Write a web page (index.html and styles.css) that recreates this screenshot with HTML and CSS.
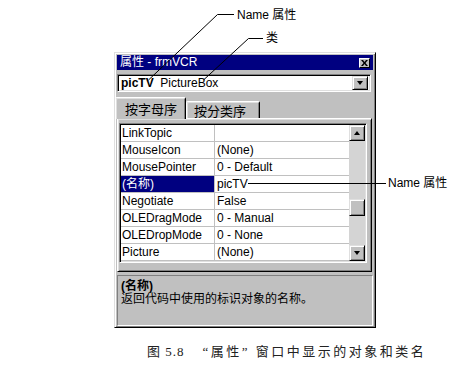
FILE: index.html
```html
<!DOCTYPE html>
<html lang="zh-CN">
<head>
    <meta charset="UTF-8">
    <meta name="viewport" content="width=device-width, initial-scale=1.0">
    <title>属性窗口</title>
    <link rel="stylesheet" href="styles.css">
</head>
<body>
    <div class="page">
        <div class="window">
            <div class="titlebar">
                <span class="title">属性 - frmVCR</span>
                <span class="close">
                    <svg width="7" height="6" viewBox="0 0 7 6"><path d="M0 0h2l1.5 2L5 0h2L4.5 3 7 6H5L3.5 4 2 6H0l2.5-3z" fill="#000"/></svg>
                </span>
            </div>

            <div class="combo">
                <span class="combo-text"><b>picTV</b>&nbsp; PictureBox</span>
                <span class="btn drop"><i class="arrow-down"></i></span>
            </div>

            <div class="tabs">
                <span class="tab active">按字母序</span>
                <span class="tab">按分类序</span>
            </div>

            <div class="tabpanel">
                <div class="grid">
                    <div class="rows">
                        <div class="row"><span class="name">LinkTopic</span><span class="value"></span></div>
                        <div class="row"><span class="name">MouseIcon</span><span class="value">(None)</span></div>
                        <div class="row"><span class="name">MousePointer</span><span class="value">0 - Default</span></div>
                        <div class="row selected"><span class="name">(名称)</span><span class="value">picTV</span></div>
                        <div class="row"><span class="name">Negotiate</span><span class="value">False</span></div>
                        <div class="row"><span class="name">OLEDragMode</span><span class="value">0 - Manual</span></div>
                        <div class="row"><span class="name">OLEDropMode</span><span class="value">0 - None</span></div>
                        <div class="row"><span class="name">Picture</span><span class="value">(None)</span></div>
                    </div>
                    <div class="vscroll">
                        <span class="btn sbtn"><i class="arrow-up"></i></span>
                        <span class="track"><span class="btn thumb"></span></span>
                        <span class="btn sbtn"><i class="arrow-down"></i></span>
                    </div>
                </div>
            </div>

            <div class="desc">
                <b>(名称)</b>
                <span>返回代码中使用的标识对象的名称。</span>
            </div>
        </div>

        <p class="caption"><span class="fig">图 5.8</span><span class="cap-text">“属性” 窗口中显示的对象和类名</span></p>

        <!-- leader lines for the annotations -->
        <svg class="callouts" width="457" height="366">
            <polyline points="148.5,80 217.5,14.5 234,14.5" />
            <polyline points="203.5,80 248.5,38.5 263,38.5" />
            <polyline points="248,183.5 386,183.5" />
        </svg>
        <span class="label label-name">Name 属性</span>
        <span class="label label-class">类</span>
        <span class="label label-name2">Name 属性</span>
    </div>
</body>
</html>
```

FILE: styles.css
```css
* {
    box-sizing: border-box;
}

body {
    margin: 0;
    background: #fff;
    font-family: "Liberation Sans", "Noto Sans CJK SC", sans-serif;
    font-size: 11px;
    color: #000;
}

.page {
    position: relative;
    width: 457px;
    height: 366px;
    padding: 52px 0 0 114px;
}

.window {
    width: 262px;
    height: 276px;
    background: #c0c0c0;
    border: 1px solid;
    border-color: #dfdfdf #000 #000 #dfdfdf;
    box-shadow: inset 1px 1px #fff, inset -1px -1px #808080;
    padding: 2px;
}

.titlebar {
    display: flex;
    align-items: center;
    justify-content: space-between;
    height: 15px;
    padding: 0 3px 0 3px;
    background: #000080;
    color: #fff;
}

.title {
    font-size: 12px;
    line-height: 15px;
}

.close {
    display: flex;
    align-items: center;
    justify-content: center;
    width: 11px;
    height: 10px;
    background: #c0c0c0;
    border: 1px solid;
    border-color: #fff #000 #000 #fff;
}

.btn {
    display: flex;
    align-items: center;
    justify-content: center;
    background: #c0c0c0;
    border: 1px solid;
    border-color: #dfdfdf #000 #000 #dfdfdf;
    box-shadow: inset 1px 1px #fff, inset -1px -1px #808080;
}

.arrow-down,
.arrow-up {
    width: 0;
    height: 0;
    border-left: 3.5px solid transparent;
    border-right: 3.5px solid transparent;
}

.arrow-down {
    border-top: 4px solid #000;
}

.arrow-up {
    border-bottom: 4px solid #000;
}

.combo {
    display: flex;
    align-items: center;
    justify-content: space-between;
    width: 254px;
    height: 18px;
    margin-top: 4px;
    padding: 2px;
    background: #fff;
    border: 1px solid;
    border-color: #808080 #fff #fff #808080;
    box-shadow: inset 1px 1px #000, inset -1px -1px #dfdfdf;
}

.combo-text {
    font-size: 12px;
    padding-left: 1px;
}

.combo-text b {
    font-size: 12px;
}

.drop {
    width: 16px;
    height: 14px;
}

.tabs {
    display: flex;
    align-items: flex-end;
    height: 21px;
    margin-top: 5px;
    padding-left: 0;
    position: relative;
    z-index: 1;
}

.tab {
    display: flex;
    align-items: center;
    height: 17px;
    padding: 0 7px;
    font-size: 12px;
    background: #c0c0c0;
    border: 1px solid;
    border-bottom: none;
    border-color: #fff #000 #000 #fff;
    box-shadow: inset 1px 1px #dfdfdf, inset -1px 0 #808080;
    border-radius: 2px 2px 0 0;
}

.tab.active {
    height: 22px;
    margin-bottom: -1px;
    margin-left: -2px;
    padding: 0 8px 0 9px;
    font-size: 13px;
}

.tab + .tab {
    width: 74px;
    font-size: 13px;
}

.tabpanel {
    width: 255px;
    height: 154px;
    padding: 4px 2px 3px 1px;
    background: #c0c0c0;
    border: 1px solid;
    border-color: #fff #000 #000 #fff;
    box-shadow: inset 1px 1px #dfdfdf, inset -1px -1px #808080;
}

.grid {
    display: flex;
    width: 248px;
    height: 140px;
    background: #fff;
    border: 1px solid;
    border-color: #808080 #fff #fff #808080;
    box-shadow: inset 1px 1px #000, inset -1px -1px #dfdfdf;
    padding: 1px;
    font-size: 12px;
}

.rows {
    flex: 1;
}

.row {
    display: flex;
    height: 17px;
    border-bottom: 1px solid #c0c0c0;
}

.name {
    width: 94px;
    padding-left: 1px;
    line-height: 16px;
    border-right: 1px solid #c0c0c0;
}

.value {
    flex: 1;
    padding-left: 2px;
    line-height: 16px;
}

.selected .name {
    background: #000080;
    color: #fff;
}

.vscroll {
    display: flex;
    flex-direction: column;
    width: 16px;
    background: #e0e0e0;
}

.sbtn {
    width: 16px;
    height: 16px;
}

.track {
    flex: 1;
    background: #d4d4d4;
}

.thumb {
    width: 16px;
    height: 17px;
    margin-top: 58px;
}

.desc {
    display: flex;
    flex-direction: column;
    height: 51px;
    margin-top: 3px;
    padding: 4px 3px;
    font-size: 12px;
    line-height: 13px;
    border: 1px solid;
    border-color: #808080 #fff #fff #808080;
}

.caption {
    margin: 17px 0 0 33px;
    font-family: "Liberation Serif", "Noto Sans CJK SC", serif;
    font-size: 13px;
    line-height: 14px;
    color: #222;
}

.fig {
    letter-spacing: 1px;
}

.cap-text {
    margin-left: 18px;
    letter-spacing: 2.5px;
}

.callouts {
    position: absolute;
    left: 0;
    top: 0;
    pointer-events: none;
}

.callouts polyline {
    fill: none;
    stroke: #000;
    stroke-width: 1;
}

.label {
    position: absolute;
    font-size: 12px;
    line-height: 14px;
    white-space: nowrap;
}

.label-name {
    left: 237px;
    top: 8px;
}

.label-class {
    left: 266px;
    top: 31px;
}

.label-name2 {
    left: 388px;
    top: 176px;
}
```
